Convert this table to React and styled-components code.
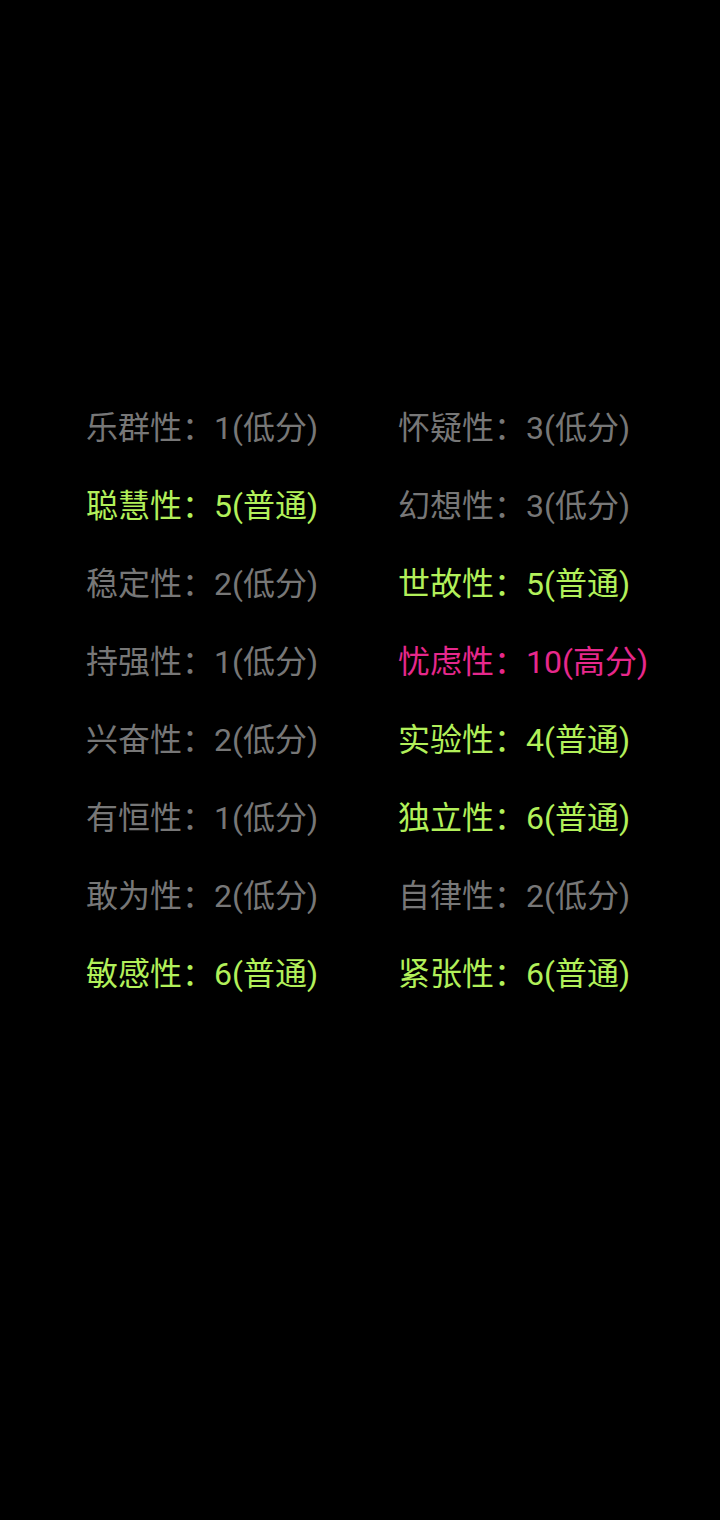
import React from "react";
import styled, { createGlobalStyle } from "styled-components";

const Global = createGlobalStyle`
  html, body { margin: 0; padding: 0; background: #000; }
  body { font-family: Roboto, "Noto Sans CJK SC", sans-serif; }
`;

const Page = styled.div`
  width: 720px;
  height: 1520px;
  background: #000;
  box-sizing: border-box;
  padding: 389px 0 0 86px;
`;

const Grid = styled.div`
  display: grid;
  grid-template-columns: 312px 312px;
  grid-auto-rows: 78px;
`;

const COLORS = {
  low: "#777777",
  normal: "#b2f05a",
  high: "#e6288c",
};

const Item = styled.div`
  font-size: 32px;
  line-height: 78px;
  white-space: nowrap;
  color: ${(p) => COLORS[p.$level]};
`;

const rows = [
  ["乐群性", 1, "低分", "low"],
  ["怀疑性", 3, "低分", "low"],
  ["聪慧性", 5, "普通", "normal"],
  ["幻想性", 3, "低分", "low"],
  ["稳定性", 2, "低分", "low"],
  ["世故性", 5, "普通", "normal"],
  ["持强性", 1, "低分", "low"],
  ["忧虑性", 10, "高分", "high"],
  ["兴奋性", 2, "低分", "low"],
  ["实验性", 4, "普通", "normal"],
  ["有恒性", 1, "低分", "low"],
  ["独立性", 6, "普通", "normal"],
  ["敢为性", 2, "低分", "low"],
  ["自律性", 2, "低分", "low"],
  ["敏感性", 6, "普通", "normal"],
  ["紧张性", 6, "普通", "normal"],
];

export default function App() {
  return (
    <>
      <Global />
      <Page>
        <Grid>
          {rows.map(([name, score, label, level]) => (
            <Item key={name} $level={level}>
              {name}：{score}({label})
            </Item>
          ))}
        </Grid>
      </Page>
    </>
  );
}
